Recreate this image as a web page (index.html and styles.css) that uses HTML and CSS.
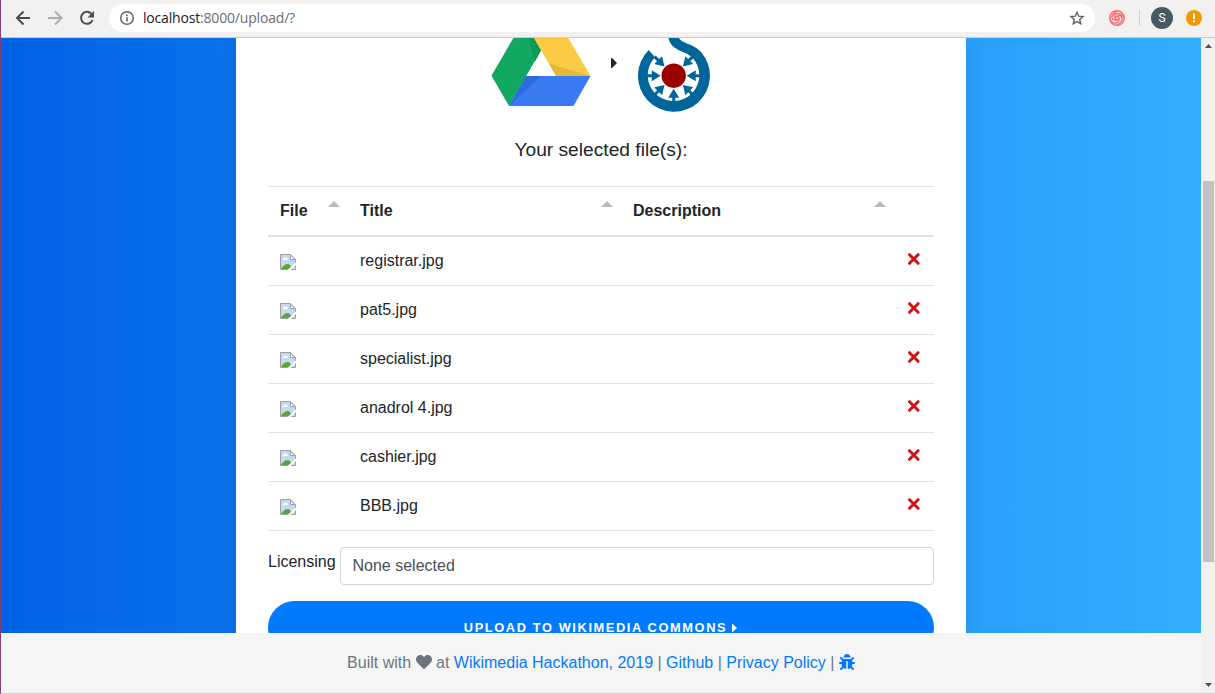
FILE: index.html
```html
<!DOCTYPE html>
<html lang="en">
<head>
<meta charset="utf-8">
<title>Upload</title>
<link rel="stylesheet" href="styles.css">
</head>
<body>
<svg class="defs" aria-hidden="true">
  <symbol id="broken" viewBox="0 0 16 16">
    <path d="M.5.5h10l5 5v10H.5z" fill="#c6d8f6" stroke="#a0a0a0"/>
    <path d="M2.500 6q0-1.500 1.500-1.500 1-2 2.500-.5 2 0 1.500 2z" fill="#fff"/>
    <path d="M1 15q3-5 7-5 2 0 4 5z" fill="#56a832"/>
    <path d="M10.500 1v4.500H15z" fill="#fff" stroke="#a0a0a0"/>
    <path d="M7.500 16L16 8.500v2.500L10.500 16z" fill="#fff"/>
  </symbol>
  <symbol id="times" viewBox="0 0 14 14">
    <path d="M2.500 2.700l8.600 8.600M11.100 2.700l-8.600 8.600" stroke="#d11313" stroke-width="3" stroke-linecap="round"/>
  </symbol>
</svg>
<header class="toolbar">
  <svg class="nav" viewBox="0 0 108 36" fill="none" stroke="#4a4b4d" stroke-width="2">
    <path d="M29 18H16.500M22.500 11.500L16 18l6.500 6.500"/>
    <path d="M47 18H59.500M54 11.500L60.500 18l-6.500 6.500" stroke="#acacac"/>
    <path d="M90.400 13.700A6 6 0 1 0 91.600 20"/>
    <path d="M93 11v6.500h-6.500z" fill="#4a4b4d" stroke="none"/>
  </svg>
  <div class="address">
    <svg class="info" viewBox="0 0 16 16"><circle cx="8" cy="8" r="6.300" fill="none" stroke="#5f6368" stroke-width="1.500"/><path d="M7.200 4.500h1.600v1.700H7.200zM7.200 7.300h1.600v4.300H7.200z" fill="#5f6368"/></svg>
    <span class="url"><b>localhost</b>:8000/upload/?</span>
    <svg class="star" viewBox="0 0 16 16"><path d="M8 2.200l1.700 4 4.300.4-3.300 2.900 1 4.200L8 11.500l-3.700 2.200 1-4.200L2 6.600l4.300-.4z" fill="none" stroke="#5f6368" stroke-width="1.400"/></svg>
  </div>
  <svg class="ext" viewBox="0 0 18 18" fill="none" stroke="#f96c70" stroke-width="1.400">
    <circle cx="9" cy="9" r="7.300"/><circle cx="9" cy="9" r="1.800"/>
    <path d="M9 7.200Q13 5 14 9T9 16M10.700 9Q12 13 8 14T1.500 9M9 10.800Q5 12 4 9T9 2M7.200 9Q5 5 9 4.500T16.500 9"/>
  </svg>
  <span class="rule"></span>
  <span class="avatar">S</span>
  <svg class="alert" viewBox="0 0 16 16"><circle cx="8" cy="8" r="8" fill="#f29900"/><path d="M7 3.500h2v5.500H7zM7 10.300h2v2H7z" fill="#fff"/></svg>
</header>
<div class="viewport">
  <div class="page">
    <main class="backdrop">
      <section class="card">
        <div class="logos">
          <svg class="drive" viewBox="491 38 100 69">
            <path d="M513.300 38H534l7 12.300L509 106l-17.500-30.200z" fill="#11a861"/>
            <path d="M528.300 38H534l7 12.300-6 11.400z" fill="#0f9756"/>
            <path d="M534 38h34.300l22.200 38H556z" fill="#fdcb43"/>
            <path d="M549.300 63.700L590.500 76H556z" fill="#e3b73c"/>
            <path d="M526 76h64.500L573.500 106H509z" fill="#377af4"/>
            <path d="M526 76h15L509 106z" fill="#2d6cda"/>
          </svg>
          <svg class="caret" viewBox="0 0 6 10"><path d="M0 0h1L6 5 1 10H0z" fill="#212529"/></svg>
          <svg class="commons" viewBox="638 38 73 75">
            <g fill="#069">
              <path d="M648.800 50A36 36 0 1 0 701 52Q697.500 48 691.500 45.300C684.500 42.500 680.500 41 679 38H668.500C669.500 43 672.500 47 678.500 50L687.500 54Q692.500 57 695 61A25.800 25.800 0 1 1 655 57.300z"/>
              <g id="arrow"><path d="M-27-1.500h5V-5.500L-13 0l-9 5.500V1.500h-5z" transform="translate(673.700 75.700)"/></g>
              <use href="#arrow" transform="rotate(45 673.700 75.700)"/>
              <use href="#arrow" transform="rotate(135 673.700 75.700)"/>
              <use href="#arrow" transform="rotate(180 673.700 75.700)"/>
              <use href="#arrow" transform="rotate(225 673.700 75.700)"/>
              <use href="#arrow" transform="rotate(270 673.700 75.700)"/>
              <use href="#arrow" transform="rotate(315 673.700 75.700)"/>
            </g>
            <circle cx="673.700" cy="75.700" r="12.200" fill="#900"/>
          </svg>
        </div>
        <h1 class="title">Your selected file(s):</h1>
        <div class="files">
          <div class="row head"><span class="sort">File</span><span class="sort">Title</span><span class="sort">Description</span><span></span></div>
          <div class="row"><span><svg class="thumb"><use href="#broken"/></svg></span><span>registrar.jpg</span><span></span><span><svg class="remove"><use href="#times"/></svg></span></div>
          <div class="row"><span><svg class="thumb"><use href="#broken"/></svg></span><span>pat5.jpg</span><span></span><span><svg class="remove"><use href="#times"/></svg></span></div>
          <div class="row"><span><svg class="thumb"><use href="#broken"/></svg></span><span>specialist.jpg</span><span></span><span><svg class="remove"><use href="#times"/></svg></span></div>
          <div class="row"><span><svg class="thumb"><use href="#broken"/></svg></span><span>anadrol 4.jpg</span><span></span><span><svg class="remove"><use href="#times"/></svg></span></div>
          <div class="row"><span><svg class="thumb"><use href="#broken"/></svg></span><span>cashier.jpg</span><span></span><span><svg class="remove"><use href="#times"/></svg></span></div>
          <div class="row"><span><svg class="thumb"><use href="#broken"/></svg></span><span>BBB.jpg</span><span></span><span><svg class="remove"><use href="#times"/></svg></span></div>
        </div>
        <div class="license"><span class="label">Licensing</span><div class="select">None selected</div></div>
        <div class="upload">Upload to Wikimedia Commons <svg class="go" viewBox="0 0 5 8"><path d="M0 0h.6L5 4 .6 8H0z" fill="#fff"/></svg></div>
      </section>
    </main>
    <footer class="footer">
      <p>Built with <svg class="glyph" viewBox="0 0 512 512"><path fill="#6c757d" d="M462.300 62.600C407.500 15.900 326 24.300 275.700 76.200L256 96.500l-19.700-20.300C186.100 24.300 104.500 15.900 49.700 62.600c-62.800 53.600-66.100 149.800-9.900 207.900l193.500 199.800c12.500 12.900 32.800 12.900 45.300 0l193.500-199.800c56.300-58.100 53-154.300-9.800-207.900z"/></svg> at <a>Wikimedia Hackathon, 2019</a> | <a>Github</a> | <a>Privacy Policy</a> | <svg class="glyph" viewBox="0 0 512 512"><path fill="#007bff" d="M512 288.900c-.5 17.400-15.200 31.100-32.700 31.100H424v16c0 21.900-4.900 42.600-13.600 61.100l60.200 60.300c12.500 12.500 12.500 32.700 0 45.200s-32.700 12.500-45.200 0l-54.800-54.700C345.900 468 314.400 480 280 480V236c0-6.600-5.400-12-12-12h-24c-6.600 0-12 5.400-12 12v244c-34.400 0-65.900-12-90.600-32.100l-54.800 54.700c-12.500 12.500-32.700 12.500-45.200 0s-12.500-32.700 0-45.200l60.200-60.300C92.900 378.600 88 357.900 88 336v-16H32.700C15.200 320 .5 306.300 0 288.900-.5 270.800 14 256 32 256h56v-58.700l-46.600-46.700c-12.500-12.500-12.500-32.700 0-45.200s32.700-12.500 45.200 0L141.300 160h229.400l54.700-54.600c12.500-12.500 32.700-12.500 45.200 0s12.500 32.700 0 45.200L424 197.300V256h56c18 0 32.500 14.800 32 32.900zM257 0c-61.900 0-112 50.100-112 112h224C369 50.100 318.900 0 257 0z"/></svg></p>
    </footer>
  </div>
  <div class="scrollbar">
    <svg class="tick" viewBox="0 0 7 4"><path d="M0 4h7L3.500 0z" fill="#505050"/></svg>
    <span class="thumbbar"></span>
    <svg class="tick" viewBox="0 0 7 4"><path d="M0 0h7L3.500 4z" fill="#505050"/></svg>
  </div>
</div>
</body>
</html>
```
FILE: styles.css
```css
* { box-sizing: border-box; }
body {
  margin: 0;
  width: 1215px;
  height: 694px;
  overflow: hidden;
  display: flex;
  flex-direction: column;
  border-left: 1px solid #84407c;
  border-bottom: 1px solid #cacaca;
  font: 16px/24px "Liberation Sans", Arial, sans-serif;
  color: #212529;
}
svg { display: block; flex: none; }
.defs { display: none; }

.toolbar {
  height: 38px;
  flex: none;
  display: flex;
  align-items: center;
  background: #f2f1f0;
  border-bottom: 1px solid #cbcac9;
  padding-bottom: 1px;
}
.nav { width: 108px; height: 36px; }
.address {
  width: 986px;
  height: 28px;
  border-radius: 14px;
  background: #fff;
  display: flex;
  align-items: center;
  padding: 0 10px;
}
.info, .star { width: 16px; height: 16px; }
.url {
  flex: 1;
  margin-left: 8px;
  font: 14px/20px "Open Sans", "Noto Sans", sans-serif;
  letter-spacing: -0.18px;
  color: #6b6e72;
}
.url b { font-weight: 400; color: #202124; }
.ext { width: 18px; height: 18px; margin-left: 13px; }
.rule { width: 1px; height: 16px; margin-left: 13px; background: #cfcecd; }
.avatar {
  width: 22px;
  height: 22px;
  margin-left: 11px;
  border-radius: 50%;
  background: #455a64;
  color: #fff;
  text-align: center;
  font: 12px/22px Roboto, sans-serif;
}
.alert { width: 16px; height: 16px; margin-left: 13px; }

.viewport { flex: 1; min-height: 0; display: flex; }
.page { width: 1200px; display: flex; flex-direction: column; }
.backdrop {
  height: 595px;
  overflow: hidden;
  display: flex;
  justify-content: center;
  background: linear-gradient(to right, #0062e6, #33aeff);
}
.card {
  width: 730px;
  height: 680px;
  padding: 0 32px;
  background: #fff;
  box-shadow: 0 8px 16px rgba(0, 0, 0, 0.1);
}
.logos { display: flex; justify-content: center; align-items: flex-start; height: 96px; }
.drive { width: 100px; height: 69px; }
.caret { width: 6px; height: 10px; margin: 20px 21px 0 20px; }
.commons { width: 73px; height: 75px; }
.title { margin: 0; font-size: 19.2px; line-height: 32px; font-weight: 400; text-align: center; }

.files { margin-top: 20px; border-top: 1px solid #dee2e6; }
.row {
  display: grid;
  grid-template-columns: 80px 273px 273px 40px;
  height: 49px;
  border-bottom: 1px solid #dee2e6;
}
.row > span { padding: 12px 12px 0; }
.head { height: 50px; border-bottom-width: 2px; font-weight: 700; }
.sort { display: flex; justify-content: space-between; }
.sort::after {
  content: "";
  width: 12px;
  height: 6px;
  margin: 2px -4px 0 0;
  background: #bbb;
  clip-path: polygon(50% 0, 100% 100%, 0 100%);
}
.thumb { width: 16px; height: 16px; margin-top: 5px; }
.remove { width: 14px; height: 14px; margin: 3px 0 0 1px; }

.license { display: flex; margin-top: 16px; }
.label { width: 72px; padding-top: 3px; }
.select {
  flex: 1;
  height: 38px;
  padding: 6px 11.500px;
  border: 1px solid #ced4da;
  border-radius: 4px;
  color: #495057;
}
.upload {
  display: flex;
  align-items: center;
  justify-content: center;
  gap: 5px;
  height: 53px;
  margin-top: 16px;
  padding-right: 1px;
  border-radius: 27px;
  background: #007bff;
  color: #fff;
  font-size: 12.8px;
  font-weight: 700;
  letter-spacing: 1.62px;
  text-transform: uppercase;
}
.go { width: 5px; height: 8px; }

.footer { flex: 1; background: #f5f5f5; color: #6c757d; text-align: center; }
.footer p { margin: 18px 0 0; }
.footer a { color: #007bff; }
.glyph { display: inline-block; width: 16px; height: 16px; vertical-align: -2px; }

.scrollbar {
  width: 14px;
  display: flex;
  flex-direction: column;
  align-items: center;
  padding: 6px 0;
  background: #f1f1f1;
}
.tick { width: 7px; height: 4px; }
.thumbbar { width: 11px; height: 381px; margin: 133px 0 auto; background: #c1c1c1; }
```
